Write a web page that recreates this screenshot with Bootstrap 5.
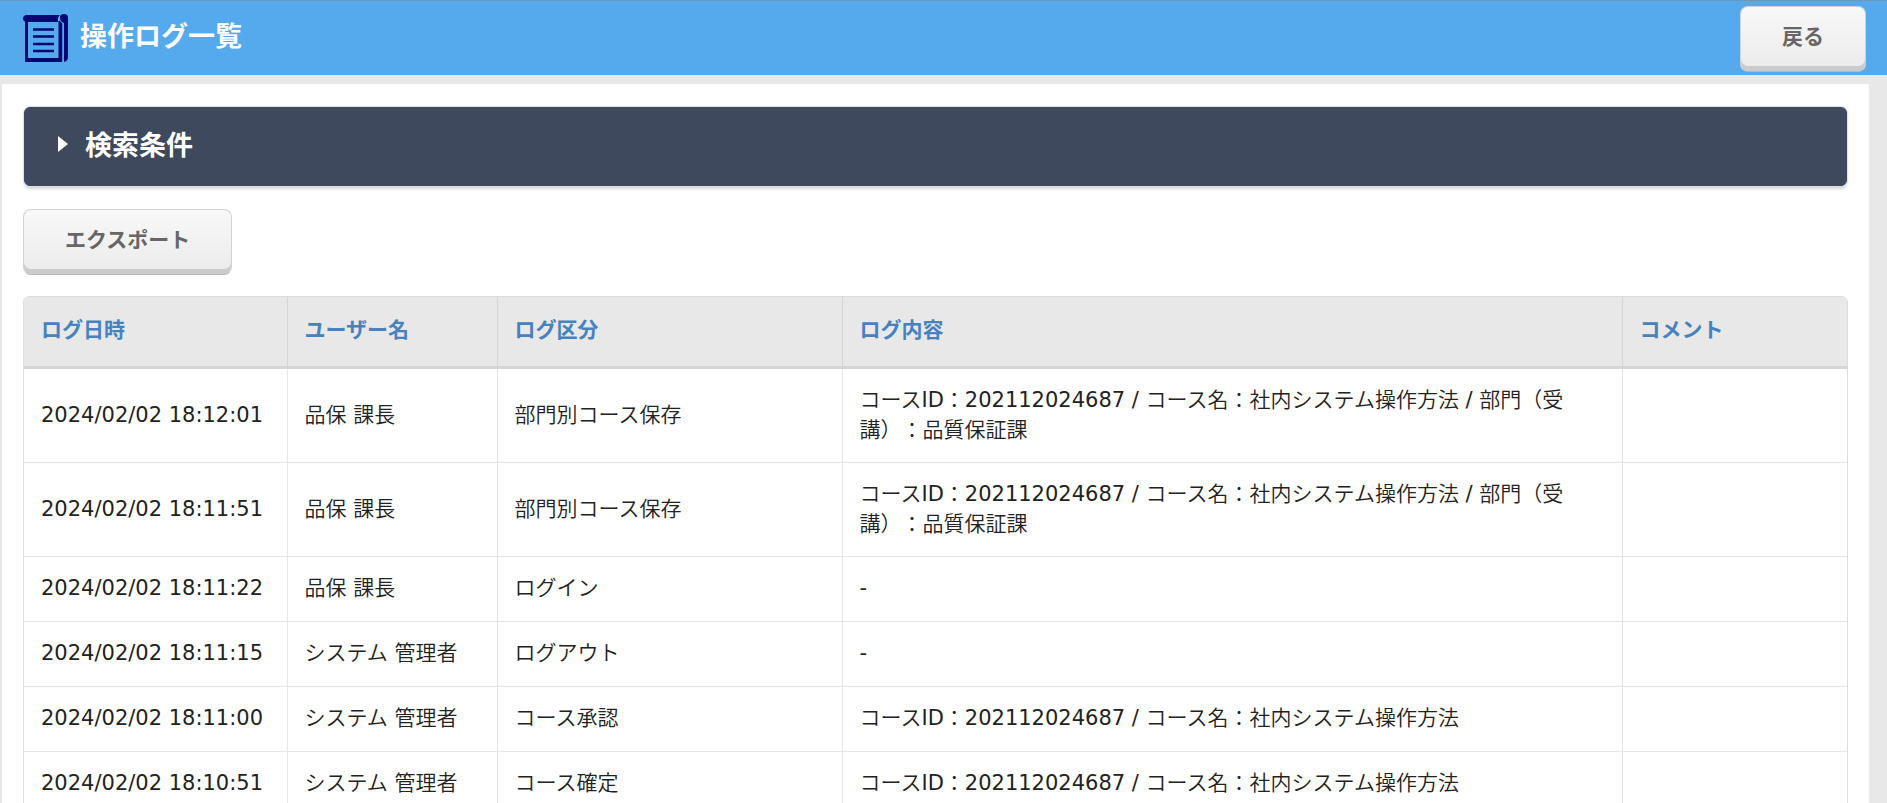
<!DOCTYPE html>
<html lang="ja">
<head>
<meta charset="utf-8">
<meta name="viewport" content="width=device-width, initial-scale=1">
<title>操作ログ一覧</title>
<link href="https://cdn.jsdelivr.net/npm/bootstrap@5.3.0/dist/css/bootstrap.min.css" rel="stylesheet">
<style>
  body {
    font-family: "DejaVu Sans", "Noto Sans CJK JP DemiLight", "Noto Sans CJK JP Light", "Noto Sans CJK JP", sans-serif;
    font-size: 21px;
    line-height: 30px;
    color: #222;
    background: #e8e8e8;
    text-spacing-trim: space-all;
  }
  .jp { font-family: "Noto Sans CJK JP", sans-serif; }
  .topbar {
    height: 75px;
    padding: 2px 21px 0 23px;
    background: #55aaee;
    border-top: 1px solid #6699bb;
  }
  .topbar h1 { font-size: 27px; line-height: 36px; color: #fff; margin-bottom: 8px; }
  .btn-soft {
    height: 66px;
    padding: 0 41px 6px;
    font-size: 21px;
    font-weight: 700;
    color: #666;
    background: linear-gradient(#f8f8f8, #ebebeb);
    border: 1px solid #d2d2d2;
    border-bottom-color: #b8b8b8;
    border-radius: 8px;
    box-shadow: inset 0 -5px 0 #cbcbcb;
  }
  .btn-soft:hover { color: #444; background: #f4f4f4; border-color: #c4c4c4; }
  .sheet { margin: 9px 18px 0 2px; padding: 23px 21px 0; background: #fff; }
  .search-wrap { padding: 0 1px; }
  .search-head {
    height: 79px;
    padding: 0 0 6px 33px;
    gap: 17px;
    font-size: 27px;
    color: #fff;
    background: #3f495d;
    border: 1px solid #3f495d;
    border-radius: 6px;
    box-shadow: 0 0 0 1px #dfe1e8, 0 3px 3px #d5d7de;
  }
  .toolbar { padding: 23px 0 21px; }
  .log-wrap { border: 1px solid #dcdcdc; border-radius: 6px 6px 0 0; overflow: hidden; }
  .log-list { table-layout: fixed; color: #222; margin: 0; }
  .log-list > thead th {
    height: 70px;
    padding: 0 17px 6px;
    background: #e8e8e8;
    border-bottom: 3px solid #d5d5d5;
    border-right: 1px solid #d5d5d5;
    vertical-align: middle;
  }
  .log-list thead a { color: #4682bf; text-decoration: none; }
  .log-list > tbody td {
    height: 65px;
    padding: 16px 17px 17px;
    border-bottom: 1px solid #e5e5e5;
    border-right: 1px solid #e5e5e5;
    vertical-align: middle;
  }
  .log-list tr > :last-child { border-right: 0; }
  .c-date { width: 263px; }
  .c-user { width: 210px; }
  .c-kind { width: 345px; }
  .c-note { width: 225px; }
</style>
</head>
<body class="vh-100 overflow-hidden">

<header class="topbar d-flex align-items-center justify-content-between">
  <div class="d-flex align-items-center">
    <svg width="45" height="50" viewBox="0 0 45 50" class="me-2 flex-shrink-0" aria-hidden="true">
      <path fill="#000872" d="M3 1H37Q34 4 35 8H3Q0 7 0 4.500Q0 2 3 1Z"/>
      <path fill="none" stroke="#000872" stroke-width="3" d="M3.500 6V46"/>
      <path fill="none" stroke="#000872" stroke-width="4" d="M2 46H39M37.500 7V47"/>
      <path fill="#000872" d="M37 4Q37 0 41 0Q45 0 45 4V43Q45 47 41 48V9Q37 8 37 4Z"/>
      <path fill="none" stroke="#55aaee" stroke-width="1" d="M36.500 2Q35 7 40 9V47"/>
      <path fill="none" stroke="#000872" stroke-width="2.500" d="M10 15.500H31M10 22.500H31M10 30H31M10 37H31"/>
    </svg>
    <h1 class="fw-bold jp mt-0 ms-1">操作ログ一覧</h1>
  </div>
  <button type="button" class="btn btn-soft jp">戻る</button>
</header>

<main class="sheet vh-100">
  <div class="search-wrap">
    <button type="button" class="search-head jp fw-bold w-100 d-flex align-items-center text-start" aria-expanded="false">
      <svg width="10" height="16" viewBox="0 0 10 16" aria-hidden="true"><path fill="#fff" d="M0 0L10 8L0 16Z"/></svg>
      <span>検索条件</span>
    </button>
  </div>

  <div class="toolbar d-flex">
    <button type="button" class="btn btn-soft jp">エクスポート</button>
  </div>

  <div class="log-wrap">
    <table class="table log-list">
      <colgroup><col class="c-date"><col class="c-user"><col class="c-kind"><col><col class="c-note"></colgroup>
      <thead class="jp">
        <tr>
          <th scope="col"><a href="#">ログ日時</a></th>
          <th scope="col"><a href="#">ユーザー名</a></th>
          <th scope="col"><a href="#">ログ区分</a></th>
          <th scope="col"><a href="#">ログ内容</a></th>
          <th scope="col"><a href="#">コメント</a></th>
        </tr>
      </thead>
      <tbody>
        <tr><td class="text-nowrap">2024/02/02 18:12:01</td><td>品保 課長</td><td>部門別コース保存</td><td>コースID：202112024687 / コース名：社内システム操作方法 / 部門（受講）：品質保証課</td><td></td></tr>
        <tr><td class="text-nowrap">2024/02/02 18:11:51</td><td>品保 課長</td><td>部門別コース保存</td><td>コースID：202112024687 / コース名：社内システム操作方法 / 部門（受講）：品質保証課</td><td></td></tr>
        <tr><td class="text-nowrap">2024/02/02 18:11:22</td><td>品保 課長</td><td>ログイン</td><td>-</td><td></td></tr>
        <tr><td class="text-nowrap">2024/02/02 18:11:15</td><td>システム 管理者</td><td>ログアウト</td><td>-</td><td></td></tr>
        <tr><td class="text-nowrap">2024/02/02 18:11:00</td><td>システム 管理者</td><td>コース承認</td><td>コースID：202112024687 / コース名：社内システム操作方法</td><td></td></tr>
        <tr><td class="text-nowrap">2024/02/02 18:10:51</td><td>システム 管理者</td><td>コース確定</td><td>コースID：202112024687 / コース名：社内システム操作方法</td><td></td></tr>
      </tbody>
    </table>
  </div>
</main>

<script src="https://cdn.jsdelivr.net/npm/bootstrap@5.3.0/dist/js/bootstrap.bundle.min.js"></script>
</body>
</html>
